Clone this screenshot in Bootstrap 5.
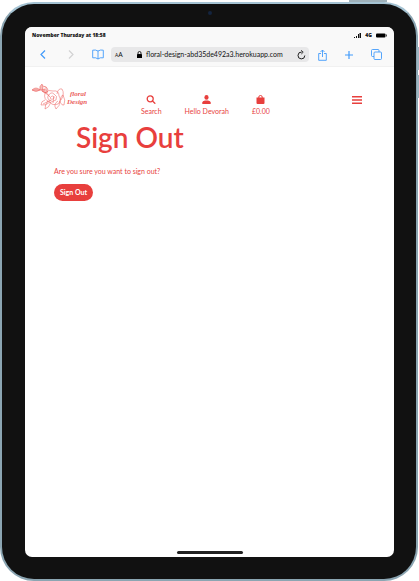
<!DOCTYPE html>
<html lang="en">
<head>
<meta charset="utf-8">
<meta name="viewport" content="width=device-width, initial-scale=1">
<title>Floral Design - Sign Out</title>
<link href="https://cdn.jsdelivr.net/npm/bootstrap@5.3.0/dist/css/bootstrap.min.css" rel="stylesheet">
<style>
:root { --coral: #e83f3d; --ios: #429bfb; }
body { font-family: Lato, sans-serif; font-size: 7px; line-height: 9px; color: var(--coral); background: #fff; }
svg { display: block; flex: none; }
.tablet { min-height: 100vh; padding-top: 2px; }
.shell { background: #111; border: 2px solid #8ba5b2; border-top-color: #a5c3d3; border-radius: 34px; padding: 23px 22px 22px 23px; margin-right: 1px; }
.screen { background: #fff; border-radius: 7px; overflow: hidden; }
.browser { background: #f9f9f9; border-bottom: 1px solid #f1f1f1; font-family: "Noto Sans", sans-serif; color: #111; }
.status { height: 16px; padding: 0 7px; font-family: "Open Sans", sans-serif; font-size: 5px; font-weight: 800; }
.tools { height: 23px; padding: 0 12px 0 13px; color: var(--ios); }
.tools button, .site button { background: none; border: 0; padding: 0; color: inherit; }
.address { background: #e8e8e9; border-radius: 4px; height: 15px; padding: 0 3px 0 4px; margin: 0 9px 0 7px; color: #111; }
.address .small-a { font-size: 5px; }
.address button { font-size: 7px; }
.address .url { font-family: Lato, sans-serif; font-size: 7px; line-height: 9px; }
.site { height: 50px; padding: 0 32px 0 6px; }
.brand-link { margin-top: 15px; }
.site a { color: var(--coral); text-decoration: none; }
.menu-list { margin-top: 28px; padding-left: 52px; gap: 23px; }
.menu-list svg { margin-bottom: 3px; }
.title { font-size: 28px; line-height: 40px; font-weight: 600; margin: 0 0 0 51px; }
.content { padding-left: 29px; }
.content p { margin: 10px 0 8px; }
.content .btn { --bs-btn-bg: var(--coral); --bs-btn-color: #fff; --bs-btn-hover-bg: #c92f2e; --bs-btn-hover-color: #fff; --bs-btn-font-size: 7px; --bs-btn-line-height: 9px; --bs-btn-padding-x: 5px; --bs-btn-padding-y: 3px; line-height: 9px; font-weight: 700; }
.home { width: 66px; height: 3px; background: #222; border-radius: 2px; margin-bottom: 3px; }
.camera { width: 4px; height: 4px; border-radius: 50%; background: #14243f; top: 11px; left: 50%; transform: translateX(-50%); }
.side-key { background: #9fb6c2; width: 2px; height: 23px; right: 0; }
.key-up { top: 47px; } .key-down { top: 75px; }
.power { background: #9fb1ba; width: 38px; height: 2px; top: 0; right: 32px; }
</style>
<script src="https://cdn.jsdelivr.net/npm/bootstrap@5.3.0/dist/js/bootstrap.bundle.min.js"></script>
</head>
<body>
<div class="tablet position-relative d-flex flex-column">
<i class="power position-absolute"></i><i class="side-key key-up position-absolute"></i><i class="side-key key-down position-absolute"></i>
<div class="shell flex-grow-1 d-flex flex-column">
<i class="camera position-absolute"></i>
<div class="screen flex-grow-1 d-flex flex-column">
<div class="browser">
  <div class="status d-flex align-items-center">
    <span class="me-auto">November Thursday at 18:58</span>
    <svg width="7" height="5" viewBox="0 0 7 5" fill="#111"><path d="M0 4h1v1H0zM2 3h1v2H2zM4 1h1v4H4zM5.500 0h1.500v5H5.500z"/></svg>
    <span class="ms-1">4G</span>
    <svg class="ms-1" width="11" height="5" viewBox="0 0 11 5"><rect y=".5" width="9.500" height="4" rx="1"/><path d="M10 1.500h.7v2H10z"/></svg>
  </div>
  <div class="tools d-flex align-items-center">
    <button type="button" aria-label="Back"><svg width="11" height="11" viewBox="0 0 11 11" fill="none" stroke="currentColor" stroke-width="1.2"><path d="M7 1.500 3 5.500l4 4"/></svg></button>
    <button type="button" class="ms-3" aria-label="Forward"><svg width="11" height="11" viewBox="0 0 11 11" fill="none" stroke="#d2d2d3" stroke-width="1.2"><path d="m4 1.500 4 4-4 4"/></svg></button>
    <button type="button" class="ms-3" aria-label="Bookmarks"><svg width="12" height="11" viewBox="0 0 12 11" fill="none" stroke="currentColor" stroke-width=".9"><path d="M6 2Q3.500.5.7 1.200v7.600Q4 8.200 6 10 8 8.200 11.300 8.800V1.200Q8.500.5 6 2v8"/></svg></button>
    <div class="address flex-grow-1 d-flex align-items-center">
      <button type="button" aria-label="Text size"><span class="small-a">A</span>A</button>
      <div class="flex-grow-1 d-flex align-items-center justify-content-center">
        <svg class="me-1" width="5" height="7" viewBox="0 0 5 7"><rect y="3" width="5" height="4" rx=".6"/><path d="M1 3V2q0-1.500 1.500-1.500T4 2v1" fill="none" stroke="#111" stroke-width=".9"/></svg>
        <span class="url">floral-design-abd35de492a3.herokuapp.com</span>
      </div>
      <button type="button" aria-label="Reload"><svg width="9" height="10" viewBox="0 0 9 10" fill="none" stroke="#222"><path d="M7.800 5.500A3.400 3.400 0 1 1 4.700 2.100"/><path d="m4 .3 2.200 1.900L4.300 4" stroke-width=".9"/></svg></button>
    </div>
    <button type="button" aria-label="Share"><svg width="9" height="12" viewBox="0 0 9 12" fill="none" stroke="currentColor" stroke-width=".9"><path d="M3 4.500H.7v6.800h7.600V4.500H6M4.500 8V1M2.500 3l2-2 2 2"/></svg></button>
    <button type="button" class="mx-3" aria-label="New tab"><svg width="12" height="10" viewBox="0 0 12 10" stroke="currentColor" stroke-width="1.200"><path d="M6 1v8M2 5h8"/></svg></button>
    <button type="button" aria-label="Tabs"><svg width="11" height="11" viewBox="0 0 11 11" fill="none" stroke="currentColor" stroke-width=".9"><rect x="3" y="3" width="7.500" height="7.500" rx="1"/><path d="M3 7.500H1.500q-1 0-1-1v-5q0-1 1-1h5.500q1 0 1 1V3"/></svg></button>
  </div>
</div>
<header class="site d-flex align-items-start">
  <a class="brand-link" href="#" aria-label="Floral Design">
    <svg width="58" height="28" viewBox="0 0 58 28" fill="none" stroke="#e83f3d" stroke-width=".5" opacity=".85">
      <path d="M1 8q4-4 8 0-4 3-8 0h13M9 8Q8 4 11 2q2 3 0 6 4-3 6 2-3 2-6-1 5 1 8 6M12 4q4 0 5 4" fill="#f6b7b3"/>
      <path d="M14 11q3-4 8-2 6-1 6 5 3 4-1 8-6 2-8-2-7-2-5-9zM17 14q3-5 6-2 4 2 2 6-4 3-7 0-2-2-1-4zM19 16q3-4 4 0-2 3-4 0M26 12q1-6 5-5 3 5-1 11M14 18q-4 1-4 5 5 1 9-3M20 20q-2 6-6 7 0-5 3-8M27 19q-5 3-2 8 4-3 4-8M29 20q1-7 3-7 3 5 1 10-2 1-4-3zM22 21l1-7M12 22l8-4"/>
      <g stroke="none" fill="#e83f3d" font-family="Liberation Serif, serif" font-style="italic" font-weight="700" font-size="7"><text x="39" y="14">floral</text><text x="36" y="22">Design</text></g>
    </svg>
  </a>
  <nav class="menu-list d-flex">
    <a class="d-flex flex-column align-items-center" href="#"><svg width="10" height="9" viewBox="0 0 10 9" fill="none" stroke="currentColor" stroke-width="1.300"><circle cx="4.200" cy="3.800" r="3"/><path d="m6.500 6 2.800 2.700"/></svg>Search</a>
    <a class="d-flex flex-column align-items-center" href="#"><svg width="9" height="9" viewBox="0 0 9 9" fill="currentColor"><ellipse cx="4.500" cy="2.400" rx="2.100" ry="2.400"/><path d="M.3 9V7.500Q.3 6 3 5.500h3Q8.700 6 8.700 7.500V9z"/></svg>Hello Devorah</a>
    <a class="d-flex flex-column align-items-center" href="#"><svg width="9" height="9" viewBox="0 0 9 9"><path d="M.5 2.500h8V8q0 1-1 1h-6q-1 0-1-1z" fill="currentColor"/><path d="M2.800 3.500V2Q2.800.5 4.500.5T6.200 2v1.500" fill="none" stroke="currentColor"/></svg>£0.00</a>
  </nav>
  <button type="button" class="ms-auto menu-list ps-0" aria-label="Menu"><svg width="10" height="10" viewBox="0 0 10 10" fill="currentColor"><path d="M0 1h10v1.500H0zM0 4.300h10v1.500H0zM0 7.600h10v1.500H0z"/></svg></button>
</header>
<main class="flex-grow-1">
  <h1 class="title">Sign Out</h1>
  <form class="content" onsubmit="return false">
    <p>Are you sure you want to sign out?</p>
    <button type="submit" class="btn rounded-pill">Sign Out</button>
  </form>
</main>
<div class="home align-self-center"></div>
</div>
</div>
</div>
</body>
</html>
